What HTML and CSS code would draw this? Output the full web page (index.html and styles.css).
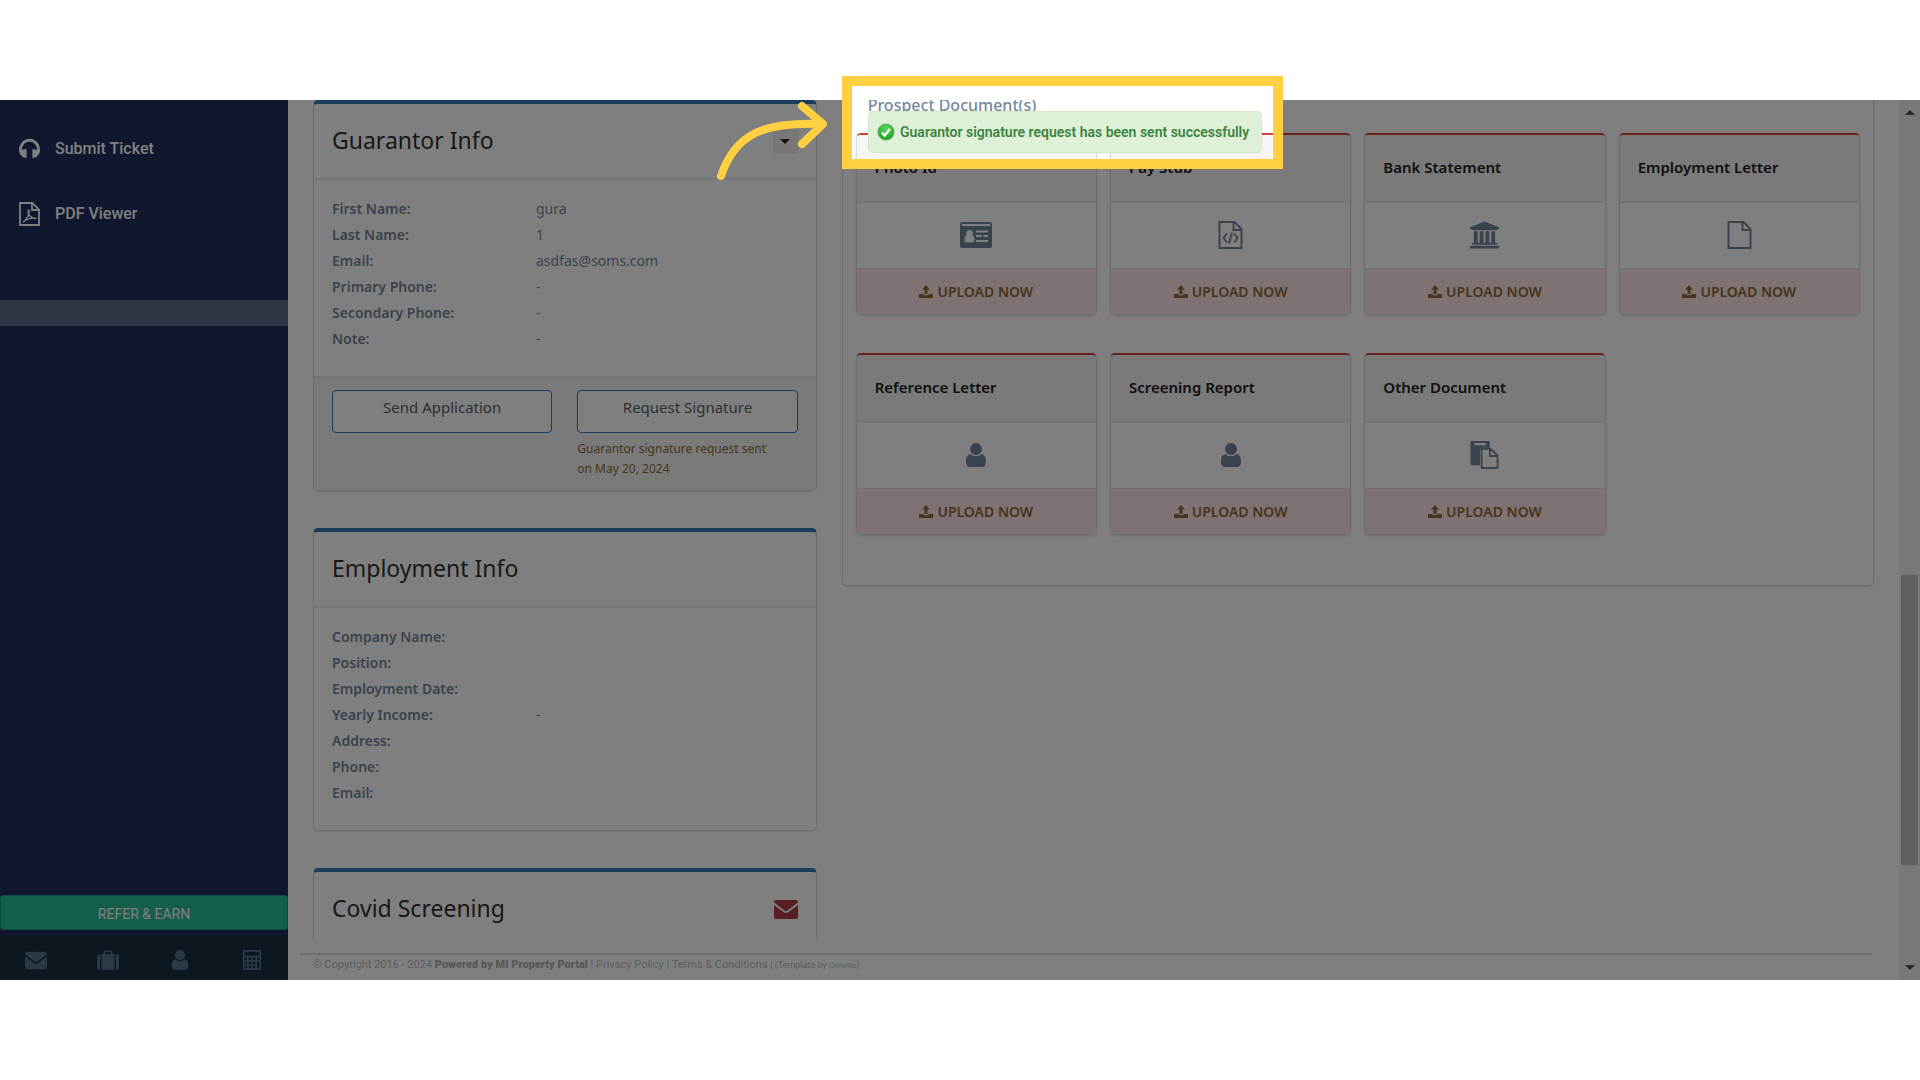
FILE: index.html
```
<!DOCTYPE html>
<html lang="en">
<head>
  <meta charset="utf-8">
  <meta name="viewport" content="width=device-width, initial-scale=1">
  <title>MI Property Portal</title>
  <link rel="stylesheet" href="styles.css">
</head>
<body>
  <!-- shared icons -->
  <svg class="sprite" aria-hidden="true">
    <symbol id="i-headset" viewBox="0 0 24 22">
      <path d="M3.500 15A9.300 9.300 0 1 1 20.500 15" fill="none" stroke="currentColor" stroke-width="3"/>
      <path d="M1 11l1.500 1L9 11v9.500l-4-1C3 18 1 15.500 1 11zM23 11l-1.500 1L15 11v9.500l4-1c2-1.500 4-4 4-8.500z"/>
    </symbol>
    <symbol id="i-pdf" viewBox="0 0 21 24">
      <path d="M1 1h12.500L20 7.500V23H1zM13 1v7h7" fill="none" stroke="currentColor" stroke-width="1.800"/>
      <path d="M4 20c2-.3 5-5.500 6-8.500.4-1.600.3-3.500-.4-3.500s-.8 2 .1 4c1.300 3 3.800 4.500 7.800 4.500-4.500-1-9 .2-13.500 3.500z" fill="none" stroke="currentColor" stroke-width="1.400"/>
    </symbol>
    <symbol id="i-mail" viewBox="0 0 24 20">
      <path d="M2 1h20a2 2 0 0 1 2 2v.6l-10.600 8a2.400 2.400 0 0 1-2.800 0L0 3.600V3a2 2 0 0 1 2-2zM0 6l9.800 7.300a3.800 3.800 0 0 0 4.400 0L24 6v12a2 2 0 0 1-2 2H2a2 2 0 0 1-2-2z"/>
    </symbol>
    <symbol id="i-case" viewBox="0 0 24 21">
      <path d="M5 4h2V2a2 2 0 0 1 2-2h6a2 2 0 0 1 2 2v2h2v17H5zM9 4h6V2H9zM3.500 4v17H3a3 3 0 0 1-3-3V7a3 3 0 0 1 3-3zM20.500 4v17h.5a3 3 0 0 0 3-3V7a3 3 0 0 0-3-3z" fill-rule="evenodd"/>
    </symbol>
    <symbol id="i-user" viewBox="0 0 20 24">
      <circle cx="10" cy="6" r="6"/>
      <path d="M4.500 11c1.500 1.500 3.300 2.200 5.500 2.200s4-.7 5.500-2.200c3 .3 4.500 3.200 4.500 8.200 0 3-1.500 4.800-4 4.800H4c-2.500 0-4-1.800-4-4.800C0 14.200 1.500 11.300 4.500 11z"/>
    </symbol>
    <symbol id="i-calc" viewBox="0 0 22 24">
      <path d="M1.500 0h19A1.500 1.500 0 0 1 22 1.500v21a1.500 1.500 0 0 1-1.500 1.500h-19A1.500 1.500 0 0 1 0 22.500v-21A1.500 1.500 0 0 1 1.500 0zM2 2v5h18V2zM2 9v3h3V9zm5 0v3h3V9zm5 0v3h3V9zm5 0v3h3V9zM2 14v3h3v-3zm5 0v3h3v-3zm5 0v3h3v-3zM2 19v3h3v-3zm5 0v3h3v-3zm5 0v3h3v-3zm5-5v8h3v-8z" fill-rule="evenodd"/>
    </symbol>
    <symbol id="i-upload" viewBox="0 0 14 13">
      <path d="M7 0l4 4.500H8.500V9h-3V4.500H3zM0 9h4.500v1.200h5V9H14v4H0z"/>
    </symbol>
    <symbol id="i-idcard" viewBox="0 0 32 26">
      <path d="M2 0h28a2 2 0 0 1 2 2v22a2 2 0 0 1-2 2H2a2 2 0 0 1-2-2V2a2 2 0 0 1 2-2zM2 2v2h28V2zM9.500 8a3.400 3.400 0 0 0-3 5.300C5 14 4.500 15.500 4.500 18c0 1.700.8 2.500 2 2.500h6c1.200 0 2-.8 2-2.500 0-2.500-.5-4-2-4.700A3.400 3.400 0 0 0 9.500 8zM16 8.500v2h12v-2zm0 4.500v2h6v-2zm7.500 0v2H28v-2zM16 18v2h12v-2z" fill-rule="evenodd"/>
    </symbol>
    <symbol id="i-code" viewBox="0 0 24 28">
      <path d="M1 1h15l7 7v19H1zM15 1v8h8M8.500 12.500L5 17l3.500 4.500M15.500 12.500L19 17l-3.500 4.500M13.500 11.500l-3 11" fill="none" stroke="currentColor" stroke-width="1.900"/>
    </symbol>
    <symbol id="i-bank" viewBox="0 0 30 28">
      <path d="M15 0l15 6v2h-2c0 .6-.4 1-1 1H3c-.6 0-1-.4-1-1H0V6zM4 10h4v12h2V10h4v12h2V10h4v12h2V10h4v12h1c.600 0 1 .4 1 1v1H2v-1c0-.6.4-1 1-1h1zM1 25h28c.6 0 1 .4 1 1v2H0v-2c0-.6.4-1 1-1z"/>
    </symbol>
    <symbol id="i-file" viewBox="0 0 24 28">
      <path d="M1 1h15l7 7v19H1zM15 1v8h8" fill="none" stroke="currentColor" stroke-width="1.900"/>
    </symbol>
    <symbol id="i-paste" viewBox="0 0 29 29">
      <path d="M1.500 0h17A1.500 1.500 0 0 1 20 1.500V7h-7.500A2.500 2.500 0 0 0 10 9.500V25H1.500A1.500 1.500 0 0 1 0 23.500v-22A1.500 1.500 0 0 1 1.500 0zM4 2v2.500h12V2z" fill-rule="evenodd"/>
      <path d="M11.500 8h9l7.500 7v13H11.500zM20 8v7.500h8" fill="none" stroke="currentColor" stroke-width="1.900"/>
    </symbol>
  </svg>

  <div class="stage">
    <div class="app">
      <nav class="sidebar">
        <a class="menu-item" href="#"><svg><use href="#i-headset"/></svg>Submit Ticket</a>
        <a class="menu-item" href="#"><svg><use href="#i-pdf"/></svg>PDF Viewer</a>
        <div class="menu-strip"></div>
        <a class="refer" href="#">REFER &amp; EARN</a>
        <div class="sidebar-footer">
          <a href="#" aria-label="Messages"><svg><use href="#i-mail"/></svg></a>
          <a href="#" aria-label="Portfolio"><svg><use href="#i-case"/></svg></a>
          <a href="#" aria-label="Profile"><svg><use href="#i-user"/></svg></a>
          <a href="#" aria-label="Calculator"><svg><use href="#i-calc"/></svg></a>
        </div>
      </nav>

      <div class="main">
        <div class="content">
          <div class="column">
            <section class="card">
              <div class="card-header">
                <h2>Guarantor Info</h2>
                <button class="toggle" type="button" aria-label="Options"></button>
              </div>
              <dl class="details">
                <dt>First Name:</dt><dd>gura</dd>
                <dt>Last Name:</dt><dd>1</dd>
                <dt>Email:</dt><dd>asdfas@soms.com</dd>
                <dt>Primary Phone:</dt><dd>-</dd>
                <dt>Secondary Phone:</dt><dd>-</dd>
                <dt>Note:</dt><dd>-</dd>
              </dl>
              <div class="card-actions">
                <button class="outline" type="button">Send Application</button>
                <div>
                  <button class="outline" type="button">Request Signature</button>
                  <p class="hint">Guarantor signature request sent on May 20, 2024</p>
                </div>
              </div>
            </section>

            <section class="card">
              <div class="card-header">
                <h2>Employment Info</h2>
              </div>
              <dl class="details">
                <dt>Company Name:</dt><dd></dd>
                <dt>Position:</dt><dd></dd>
                <dt>Employment Date:</dt><dd></dd>
                <dt>Yearly Income:</dt><dd>-</dd>
                <dt>Address:</dt><dd></dd>
                <dt>Phone:</dt><dd></dd>
                <dt>Email:</dt><dd></dd>
              </dl>
            </section>

            <section class="card">
              <div class="card-header">
                <h2>Covid Screening</h2>
                <a class="send-mail" href="#" aria-label="Send by email"><svg><use href="#i-mail"/></svg></a>
              </div>
              <dl class="details"></dl>
            </section>
          </div>

          <section class="panel">
            <h3>Prospect Document(s)</h3>
            <div class="docs">
              <article class="doc">
                <h4>Photo Id</h4>
                <div class="doc-icon"><svg class="wide"><use href="#i-idcard"/></svg></div>
                <button class="upload" type="button"><svg><use href="#i-upload"/></svg>UPLOAD NOW</button>
              </article>
              <article class="doc">
                <h4>Pay Stub</h4>
                <div class="doc-icon"><svg><use href="#i-code"/></svg></div>
                <button class="upload" type="button"><svg><use href="#i-upload"/></svg>UPLOAD NOW</button>
              </article>
              <article class="doc">
                <h4>Bank Statement</h4>
                <div class="doc-icon"><svg><use href="#i-bank"/></svg></div>
                <button class="upload" type="button"><svg><use href="#i-upload"/></svg>UPLOAD NOW</button>
              </article>
              <article class="doc">
                <h4>Employment Letter</h4>
                <div class="doc-icon"><svg><use href="#i-file"/></svg></div>
                <button class="upload" type="button"><svg><use href="#i-upload"/></svg>UPLOAD NOW</button>
              </article>
              <article class="doc">
                <h4>Reference Letter</h4>
                <div class="doc-icon"><svg class="small"><use href="#i-user"/></svg></div>
                <button class="upload" type="button"><svg><use href="#i-upload"/></svg>UPLOAD NOW</button>
              </article>
              <article class="doc">
                <h4>Screening Report</h4>
                <div class="doc-icon"><svg class="small"><use href="#i-user"/></svg></div>
                <button class="upload" type="button"><svg><use href="#i-upload"/></svg>UPLOAD NOW</button>
              </article>
              <article class="doc">
                <h4>Other Document</h4>
                <div class="doc-icon"><svg><use href="#i-paste"/></svg></div>
                <button class="upload" type="button"><svg><use href="#i-upload"/></svg>UPLOAD NOW</button>
              </article>
            </div>
          </section>
        </div>

        <footer class="footer">
          © Copyright 2016 - 2024 <strong>Powered by MI Property Portal</strong> |
          <a href="#">Privacy Policy</a> | <a href="#">Terms &amp; Conditions</a>
          <small>| (Template by <a class="credit" href="#">Colorlib</a>)</small>
        </footer>
      </div>

      <div class="scrollbar">
        <span class="arrow up"></span>
        <span class="track-before"></span>
        <span class="thumb"></span>
        <span class="track-after"></span>
        <span class="arrow down"></span>
      </div>

      <div class="spotlight"></div>
    </div>

    <div class="frame">
      <div class="alert" role="status">
        <svg viewBox="0 0 20 20">
          <defs>
            <radialGradient id="ball" cx="50%" cy="25%" r="75%">
              <stop offset="0" stop-color="#5fd45a"/>
              <stop offset="1" stop-color="#0fa51f"/>
            </radialGradient>
          </defs>
          <circle cx="10" cy="10" r="9" fill="url(#ball)" stroke="#6f9f6d"/>
          <path d="M5.500 10.500l3 3.500 6-7.500" fill="none" stroke="#fff" stroke-width="2.600"/>
        </svg>
        Guarantor signature request has been sent successfully
      </div>
    </div>
    <svg class="pointer" viewBox="0 0 112 84">
      <path d="M6 76C20 34 48 22 106 24M87 6l21 18L87 44"/>
    </svg>
  </div>
</body>
</html>
```

FILE: styles.css
```
* {
  box-sizing: border-box;
}

body {
  margin: 0;
  background: #fff;
  color: #73879c;
  font: 14px/26px "Noto Sans", "Open Sans", sans-serif;
}

h2, h3, h4, p, dl, dd {
  margin: 0;
}

a {
  color: inherit;
  text-decoration: none;
}

button {
  font: inherit;
  cursor: pointer;
}

svg {
  fill: currentColor;
}

.sprite {
  display: none;
}

.stage {
  position: relative;
  padding: 100px 0;
}

.app {
  position: relative;
  display: flex;
  height: calc(100vh - 200px);
  overflow: hidden;
}

/* Sidebar */
.sidebar {
  display: flex;
  flex-direction: column;
  width: 288px;
  padding-top: 16px;
  background: #202e5c;
  color: #fff;
  font-family: Roboto, sans-serif;
}

.menu-item {
  display: flex;
  align-items: center;
  gap: 14px;
  height: 65px;
  padding-left: 18px;
  font-size: 16px;
  font-weight: 500;
}

.menu-item svg {
  width: 23px;
  height: 24px;
}

.menu-strip {
  height: 26px;
  margin-top: 54px;
  background: #5a6e86;
}

.refer {
  height: 35px;
  margin-top: auto;
  border: 1px solid #169f85;
  border-radius: 3px;
  background: #28be98;
  font-size: 14px;
  line-height: 37px;
  text-align: center;
}

.sidebar-footer {
  display: grid;
  grid-template-columns: repeat(4, 1fr);
  align-items: center;
  justify-items: center;
  height: 44px;
  margin-top: 6px;
  padding-top: 4px;
  background: #1a2e40;
  color: #5a738e;
}

.sidebar-footer svg {
  display: block;
  width: 22px;
  height: 20px;
}

/* Main area */
.main {
  display: flex;
  flex: 1;
  flex-direction: column;
}

.content {
  display: grid;
  flex: 1;
  grid-template-columns: repeat(3, 1fr);
  align-items: start;
  gap: 25px;
  min-height: 0;
  padding: 0 25px;
  overflow: hidden;
}

.column {
  display: grid;
  gap: 37px;
}

.card {
  border: 1px solid #dcdcdc;
  border-top: 4px solid #337ab7;
  border-radius: 5px;
  box-shadow: 0 1px 2px rgba(0, 0, 0, 0.1);
}

.card-header {
  display: flex;
  align-items: center;
  justify-content: space-between;
  height: 76px;
  padding: 0 18px;
  border-bottom: 2px solid #ececec;
}

.card-header h2 {
  padding-bottom: 3px;
  color: #333;
  font-size: 23px;
  font-weight: 400;
}

.toggle {
  display: flex;
  align-items: center;
  justify-content: center;
  width: 25px;
  height: 25px;
  padding: 0;
  border: 0;
  border-radius: 3px;
  background: #eee;
}

.toggle::before {
  border: 5px solid transparent;
  border-top-color: #222;
  border-bottom: 0;
  content: "";
}

.send-mail {
  color: #b04044;
}

.send-mail svg {
  display: block;
  width: 24px;
  height: 20px;
}

.details {
  display: grid;
  grid-template-columns: 204px 1fr;
  padding: 16px 18px 24px;
}

.details dt {
  font-weight: 600;
}

.details dd {
  min-height: 26px;
}

.card-actions {
  display: grid;
  grid-template-columns: 1fr 1fr;
  align-items: start;
  gap: 25px;
  padding: 12px 18px 11px;
  border-top: 2px solid #e8e8e8;
  background: #f5f5f5;
}

.outline {
  width: 100%;
  height: 43px;
  padding: 0 0 10px;
  border: 1px solid #337ab7;
  border-radius: 4px;
  background: #fff;
  color: #5c6168;
  font-size: 15px;
}

.hint {
  padding: 6px 24px 0 0;
  color: #8a6d3b;
  font-size: 12px;
  line-height: 20px;
}

/* Documents, scrolled a little past the top edge */
.panel {
  grid-column: span 2;
  margin-top: -26px;
  padding: 20px 13px 50px;
  border: 1px solid #dcdcdc;
  border-radius: 5px;
  box-shadow: 0 1px 2px rgba(0, 0, 0, 0.1);
}

.panel h3 {
  padding: 0 12px;
  font-size: 16px;
  font-weight: 500;
  line-height: 20px;
}

.docs {
  display: grid;
  grid-template-columns: repeat(4, 1fr);
  gap: 38px 13px;
  margin-top: 18px;
}

.doc {
  overflow: hidden;
  border: 1px solid #dcdcdc;
  border-top: 2px solid #d9403c;
  border-radius: 5px;
  box-shadow: 0 1px 3px rgba(0, 0, 0, 0.15);
}

.doc h4 {
  height: 68px;
  padding-left: 18px;
  border-bottom: 2px solid #e8e8e8;
  background: #f5f5f5;
  color: #222;
  font-size: 15px;
  font-weight: 600;
  line-height: 64px;
}

.doc-icon {
  display: flex;
  align-items: center;
  justify-content: center;
  height: 65px;
  padding-bottom: 2px;
}

.doc-icon svg {
  width: 29px;
  height: 28px;
}

.doc-icon .wide {
  width: 32px;
  height: 26px;
}

.doc-icon .small {
  width: 20px;
  height: 24px;
}

.upload {
  display: flex;
  align-items: center;
  justify-content: center;
  gap: 4px;
  width: 100%;
  height: 46px;
  padding: 0;
  border: 0;
  border-top: 1px solid #e8dcdc;
  background: #ffe4e4;
  color: #8a6d3b;
  font-weight: 600;
}

.upload svg {
  width: 14px;
  height: 13px;
}

.footer {
  height: 27px;
  margin: 13px 27px 0 12px;
  padding-left: 13px;
  border-top: 2px solid #dcdcdc;
  color: #bbb;
  font: 11px/20px Roboto, sans-serif;
}

.footer strong {
  color: #b0b0b0;
  font-weight: 900;
}

.footer small {
  font-size: 9px;
}

.footer .credit {
  font-size: 8px;
}

/* Scrollbar */
.scrollbar {
  display: flex;
  flex-direction: column;
  align-items: center;
  width: 21px;
  padding: 10px 0;
  background: #f1f1f1;
}

.arrow {
  border: 5px solid transparent;
}

.up {
  border-top: 0;
  border-bottom-color: #505050;
}

.down {
  border-top-color: #505050;
  border-bottom: 0;
}

.track-before {
  flex: 46;
}

.thumb {
  flex: 29;
  width: 17px;
  background: #c1c1c1;
}

.track-after {
  flex: 10;
}

/* Walkthrough layer: dims the page around the message */
.spotlight {
  position: absolute;
  top: -24px;
  left: 842px;
  width: 441px;
  height: 93px;
  box-shadow: 0 0 0 2000px rgba(0, 0, 0, 0.5);
}

.frame {
  position: absolute;
  top: 76px;
  left: 842px;
  width: 441px;
  height: 93px;
  padding: 25px 11px 0 16px;
  border: 10px solid #ffd142;
}

.alert {
  display: flex;
  align-items: center;
  gap: 5px;
  height: 42px;
  padding-left: 8px;
  border: 1px solid #d6e9c6;
  border-radius: 5px;
  background: #dff0d8;
  color: #3c8540;
  font: 600 14px/20px Roboto, sans-serif;
  white-space: nowrap;
}

.alert svg {
  width: 18px;
  height: 18px;
}

.pointer {
  position: absolute;
  top: 100px;
  left: 715px;
  width: 112px;
  height: 84px;
  fill: none;
  stroke: #ffd142;
  stroke-width: 8;
  stroke-linecap: round;
  stroke-linejoin: round;
}
```
